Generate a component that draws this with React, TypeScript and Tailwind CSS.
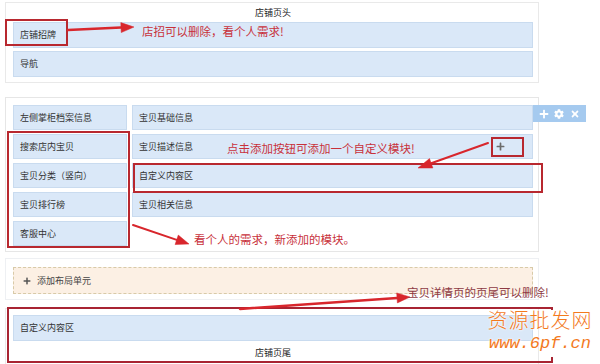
import { FaPlus, FaCog, FaTimes } from 'react-icons/fa';

type RowProps = { children?: React.ReactNode; className?: string };

// 浅蓝色模块条
function Row({ children, className = '' }: RowProps) {
  return (
    <div className={`flex items-center px-[6px] bg-[#dae8f8] border border-[#c9dbef] ${className}`}>
      {children}
    </div>
  );
}

type ArrowProps = { x1: number; y1: number; x2: number; y2: number; w?: number; hl?: number; hw?: number };

function Arrow({ x1, y1, x2, y2, w = 2.5, hl = 11, hw = 5 }: ArrowProps) {
  const dx = x2 - x1;
  const dy = y2 - y1;
  const len = Math.sqrt(dx * dx + dy * dy);
  const ux = dx / len;
  const uy = dy / len;
  const bx = x2 - ux * hl;
  const by = y2 - uy * hl;
  const px = -uy * hw;
  const py = ux * hw;
  return (
    <g fill="#d8262c" stroke="#d8262c">
      <line x1={x1} y1={y1} x2={bx} y2={by} strokeWidth={w} strokeLinecap="round" />
      <polygon points={`${x2},${y2} ${bx + px},${by + py} ${bx - px},${by - py}`} strokeWidth={0.5} />
    </g>
  );
}

export default function App() {
  const left = ['左侧掌柜档案信息', '搜索店内宝贝', '宝贝分类（竖向）', '宝贝排行榜', '客服中心'];

  return (
    <div className="relative w-[600px] h-[364px] bg-white overflow-hidden font-['Noto_Sans_CJK_SC',sans-serif] text-[9px] text-[#333]">
      <div className="pt-[2px] ml-[5px] w-[534px]">
        {/* 页头 */}
        <div className="border border-[#e9e9e9] pl-[7px] pr-[5px] pb-[5px]">
          <div className="h-[19px] flex items-center justify-center text-[#222]">店铺页头</div>
          <Row className="h-[26px]">店铺招牌</Row>
          <Row className="h-[26px] mt-[3px]">导航</Row>
        </div>

        {/* 主体 */}
        <div className="mt-[14px] border border-[#e6e6e6] pl-[7px] pr-[5px] pt-[7px] pb-[5px] flex gap-[5px]">
          <div className="w-[114px] flex flex-col gap-[4px]">
            {left.map((t) => (
              <Row key={t} className="h-[25px]">{t}</Row>
            ))}
          </div>
          <div className="flex-1 flex flex-col gap-[4px]">
            <Row className="h-[25px]">宝贝基础信息</Row>
            <Row className="h-[25px] justify-between">
              <span>宝贝描述信息</span>
              <FaPlus className="mr-[21px] text-[#6b6b6b]" size={9} />
            </Row>
            <Row className="h-[25px]">自定义内容区</Row>
            <Row className="h-[25px]">宝贝相关信息</Row>
          </div>
        </div>

        {/* 添加布局单元 */}
        <div className="mt-[6px] border border-[#eef0f3] pl-[7px] pr-[5px] pt-[8px] pb-[5px]">
          <div className="h-[27px] flex items-center gap-[6px] pl-[9px] bg-[#fcf0e4] border border-dashed border-[#d8caa8] text-[#444]">
            <FaPlus className="text-[#555]" size={8} />
            <span>添加布局单元</span>
          </div>
        </div>

        {/* 页尾 */}
        <div className="mt-[8px] border border-[#e9e9e9] pl-[7px] pr-[5px] pt-[6px]">
          <Row className="h-[26px]">自定义内容区</Row>
          <div className="h-[24px] flex items-center justify-center text-[#222]">店铺页尾</div>
        </div>
      </div>

      {/* 工具条 */}
      <div className="absolute left-[533px] top-[105px] w-[53px] h-[17px] bg-[#a5caef] flex items-center justify-around px-[3px] text-white">
        <FaPlus size={10} />
        <FaCog size={10} />
        <FaTimes size={10} />
      </div>

      {/* 红框标注 */}
      <div className="absolute left-[5px] top-[19px] w-[63px] h-[27px] border-2 border-[#b8282f]" />
      <div className="absolute left-[7px] top-[131px] w-[123px] h-[117px] border-2 border-[#b8282f]" />
      <div className="absolute left-[133px] top-[163px] w-[410px] h-[30px] border-2 border-[#b8282f]" />
      <div className="absolute left-[491px] top-[137px] w-[33px] h-[20px] border-2 border-[#b8282f]" />
      <div className="absolute left-[7px] top-[307px] w-[546px] h-[56px] border-2 border-[#a82432]" />

      {/* 箭头 */}
      <svg className="absolute inset-0 pointer-events-none" width={600} height={364}>
        <Arrow x1={68} y1={30} x2={134} y2={27} w={2.5} hl={13} hw={5} />
        <Arrow x1={488} y1={143} x2={418} y2={168} w={2} hl={14} hw={5} />
        <Arrow x1={133} y1={225} x2={189} y2={244} w={2} hl={13} hw={5} />
        <Arrow x1={240} y1={309} x2={410} y2={297} w={2.5} hl={13} hw={5} />
      </svg>

      {/* 文字标注 */}
      <div className="absolute left-[142px] top-[23px] text-[11.5px] leading-[16px] text-[#c8313b]">店招可以删除，看个人需求!</div>
      <div className="absolute left-[227px] top-[140px] text-[11.5px] leading-[16px] text-[#c8313b]">点击添加按钮可添加一个自定义模块!</div>
      <div className="absolute left-[194px] top-[231px] text-[11.5px] leading-[16px] text-[#c8313b]">看个人的需求，新添加的模块。</div>
      <div className="absolute left-[407px] top-[284px] text-[11.5px] leading-[16px] text-[#8e3a44]">宝贝详情页的页尾可以删除!</div>

      {/* 水印 */}
      <div className="absolute left-[545px] top-[310px] w-[55px] h-[47px] bg-white" />
      <div className="absolute left-[484px] top-[306px] w-[112px] flex flex-col items-center text-[#f37a1e] [text-shadow:0_0_2px_white,0_0_3px_white]">
        <div className="text-[20px] leading-[28px] tracking-[1px] font-light">资源批发网</div>
        <div className="font-['Liberation_Mono',monospace] italic text-[17px] leading-[20px]">www.6pf.cn</div>
      </div>
    </div>
  );
}
